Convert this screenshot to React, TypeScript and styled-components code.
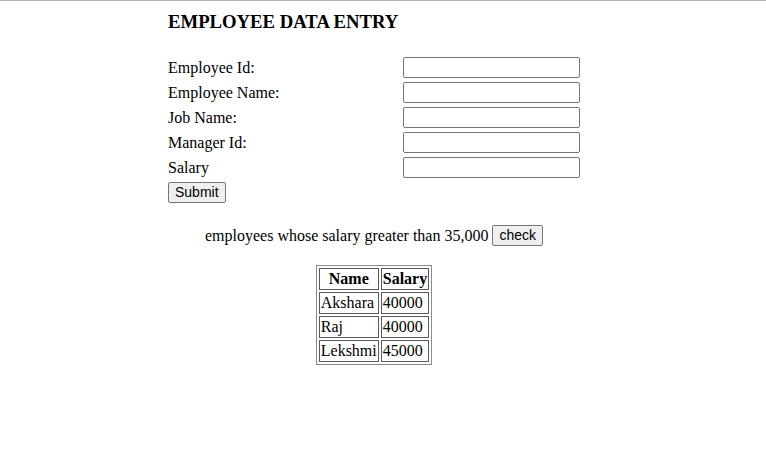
import React from "react";
import styled, { createGlobalStyle } from "styled-components";

const Global = createGlobalStyle`
  html, body { margin: 0; padding: 0; background: #fff; }
  body { font-family: "Liberation Serif", "Times New Roman", serif; font-size: 16px; color: #000; }
`;

const Page = styled.div`
  border-top: 1px solid #b4b4b4;
  padding: 0 0 40px 168px;
`;

const Container = styled.div`
  width: 412px;
`;

const Heading = styled.h3`
  font-size: 18.72px;
  font-weight: bold;
  margin: 10px 0 0;
  line-height: 22px;
`;

const Form = styled.form`
  display: grid;
  grid-template-columns: 235px 177px;
  row-gap: 4px;
  align-items: center;
  margin-top: 24px;
`;

const Label = styled.label`
  font-size: 16px;
  line-height: 18px;
`;

const Input = styled.input`
  box-sizing: border-box;
  width: 177px;
  height: 21px;
  border: 1px solid #767676;
  border-radius: 2px;
  padding: 1px 2px;
  font-family: "Liberation Sans", Arial, sans-serif;
  font-size: 13.33px;
  background: #fff;
  margin: 0;
`;

const Button = styled.button`
  box-sizing: border-box;
  height: 21px;
  padding: 1px 6px;
  border: 1px solid #767676;
  border-radius: 2px;
  background: #efefef;
  color: #000;
  font-family: "Liberation Sans", Arial, sans-serif;
  font-size: 14px;
  line-height: 17px;
  margin: 0;
`;

const SubmitRow = styled.div`
  grid-column: 1 / -1;
  display: flex;
`;

const CheckLine = styled.div`
  display: flex;
  justify-content: center;
  align-items: center;
  gap: 4px;
  margin-top: 22px;
  font-size: 16px;
`;

const TableWrap = styled.div`
  display: flex;
  justify-content: center;
  margin-top: 19px;
`;

const Table = styled.table`
  border: 1px solid #8a8a8a;
  border-spacing: 2px;
  font-size: 16px;
`;

const Th = styled.th`
  border: 1px solid #5a5a5a;
  padding: 1px;
  font-weight: bold;
  text-align: center;
`;

const Td = styled.td`
  border: 1px solid #5a5a5a;
  padding: 1px;
  text-align: left;
`;

const fields = ["Employee Id:", "Employee Name:", "Job Name:", "Manager Id:", "Salary"];
const rows = [
  { name: "Akshara", salary: "40000" },
  { name: "Raj", salary: "40000" },
  { name: "Lekshmi", salary: "45000" },
];

export default function App() {
  return (
    <>
      <Global />
      <Page>
        <Container>
          <Heading>EMPLOYEE DATA ENTRY</Heading>
          <Form onSubmit={(e) => e.preventDefault()}>
            {fields.map((f) => (
              <React.Fragment key={f}>
                <Label>{f}</Label>
                <Input type="text" />
              </React.Fragment>
            ))}
            <SubmitRow>
              <Button type="submit">Submit</Button>
            </SubmitRow>
          </Form>
          <CheckLine>
            <span>employees whose salary greater than 35,000</span>
            <Button type="button">check</Button>
          </CheckLine>
          <TableWrap>
            <Table>
              <thead>
                <tr>
                  <Th>Name</Th>
                  <Th>Salary</Th>
                </tr>
              </thead>
              <tbody>
                {rows.map((r) => (
                  <tr key={r.name}>
                    <Td>{r.name}</Td>
                    <Td>{r.salary}</Td>
                  </tr>
                ))}
              </tbody>
            </Table>
          </TableWrap>
        </Container>
      </Page>
    </>
  );
}
